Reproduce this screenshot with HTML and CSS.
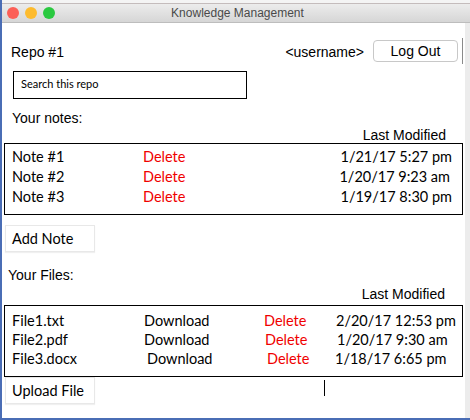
FILE: index.html
```html
<!DOCTYPE html>
<html>
<head>
<meta charset="utf-8">
<link rel="stylesheet" href="styles.css">
</head>
<body>
<div class="window">
  <div class="topline"></div>
  <div class="titlebar">
    <div class="lights">
      <span class="light red"></span>
      <span class="light yellow"></span>
      <span class="light green"></span>
    </div>
    <div class="title">Knowledge Management</div>
  </div>
  <div class="content">
    <div class="main">
      <div class="header">
        <span class="repo">Repo #1</span>
        <span class="spacer"></span>
        <span class="user">&lt;username&gt;</span>
        <button class="logout">Log Out</button>
        <span class="vline"></span>
      </div>
      <div class="search">Search this repo</div>
      <div class="label notes-label">Your notes:</div>
      <div class="label lastmod">Last Modified</div>
      <div class="box notes">
        <div class="row"><span>Note #1</span><span class="del">Delete</span><span class="date">1/21/17 5:27 pm</span></div>
        <div class="row"><span>Note #2</span><span class="del">Delete</span><span class="date d2">1/20/17 9:23 am</span></div>
        <div class="row"><span>Note #3</span><span class="del">Delete</span><span class="date">1/19/17 8:30 pm</span></div>
      </div>
      <div class="btn add">Add Note</div>
      <div class="label files-label">Your Files:</div>
      <div class="label lastmod lastmod2">Last Modified</div>
      <div class="box files">
        <div class="frow"><span>File1.txt</span><span>Download</span><span class="del">Delete</span><span>2/20/17 12:53 pm</span></div>
        <div class="frow"><span>File2.pdf</span><span>Download</span><span class="del s1">Delete</span><span class="s1">1/20/17 9:30 am</span></div>
        <div class="frow"><span>File3.docx</span><span class="s3">Download</span><span class="del s3">Delete</span><span class="sm1">1/18/17 6:65 pm</span></div>
      </div>
      <div class="bottom">
        <div class="btn upload">Upload File</div>
        <span class="caret"></span>
      </div>
    </div>
    <div class="scroll"></div>
  </div>
</div>
</body>
</html>
```

FILE: styles.css
```css
html, body {
  margin: 0;
  padding: 0;
  background: #ffffff;
}
body {
  width: 470px;
  height: 420px;
  overflow: hidden;
}
.window {
  width: 470px;
  height: 420px;
  box-sizing: border-box;
  border-left: 2px solid #4a6db5;
  border-bottom: 2px solid #4a6db5;
  display: flex;
  flex-direction: column;
  font-family: "Liberation Sans", Arial, sans-serif;
  color: #000;
}
.topline {
  height: 3px;
  border-bottom: 1px solid #c4bcbc;
  background: #f4f4f4;
}
.titlebar {
  height: 18px;
  background: linear-gradient(#ececec, #d6d6d6);
  border-bottom: 1px solid #bdbdbd;
  display: flex;
  align-items: center;
}
.lights {
  display: flex;
  gap: 6px;
  padding-left: 5px;
}
.light {
  width: 12px;
  height: 12px;
  border-radius: 50%;
  display: block;
}
.red { background: #fc5f57; }
.yellow { background: #fdbb2e; }
.green { background: #2ac940; }
.title {
  flex: 1;
  text-align: center;
  font-size: 12px;
  color: #4a4a4a;
  margin-left: -48px;
  padding-right: 2px;
}
.content {
  flex: 1;
  display: flex;
}
.main {
  flex: 1;
  display: flex;
  flex-direction: column;
}
.scroll {
  width: 5px;
  background: #ececec;
}
.header {
  margin-top: 17px;
  height: 22px;
  display: flex;
  align-items: center;
  padding-left: 9px;
  padding-right: 2px;
  font-size: 14px;
}
.repo, .user { padding-top: 2px; }
.spacer { flex: 1; }
.user { margin-right: 9px; }
.logout {
  width: 85px;
  height: 22px;
  box-sizing: border-box;
  border: 1px solid #c8c8c8;
  border-radius: 4px;
  background: #fff;
  font-family: "Liberation Sans", Arial, sans-serif;
  font-size: 14px;
  color: #000;
  padding: 0;
}
.vline {
  width: 1px;
  height: 26px;
  background: #8a8a8a;
  margin-left: 4px;
}
.search {
  margin-top: 9px;
  margin-left: 11px;
  width: 234px;
  height: 28px;
  box-sizing: border-box;
  border: 1px solid #000;
  padding-left: 7px;
  padding-top: 5px;
  font-family: Lato, "Open Sans", sans-serif;
  font-size: 11px;
  line-height: 14px;
}
.label {
  font-size: 14px;
  line-height: 16px;
  padding-top: 1px;
}
.notes-label {
  margin-top: 10px;
  padding-left: 10px;
}
.lastmod {
  text-align: right;
  padding-right: 19px;
}
.box {
  margin: 0 2px;
  border: 1px solid #000;
  box-sizing: border-box;
  height: 72px;
  font-family: Lato, "Open Sans", sans-serif;
  font-size: 14.5px;
}
.notes {
  padding: 3px 10px 0 7px;
}
.row {
  display: grid;
  grid-template-columns: 131px 1fr auto;
  line-height: 20px;
}
.d2 { padding-right: 2px; }
.del { color: #f00000; }
.btn {
  margin-left: 3px;
  width: 90px;
  height: 27px;
  box-sizing: border-box;
  border: 1px solid #e8e8e8;
  box-shadow: 0 1px 1px rgba(0,0,0,0.06);
  padding-left: 6px;
  padding-top: 1px;
  font-family: Lato, "Open Sans", sans-serif;
  font-size: 14.5px;
  line-height: 24px;
}
.add { margin-top: 10px; }
.files-label {
  margin-top: 14px;
  padding-left: 6px;
}
.lastmod2 {
  margin-top: 2px;
  padding-right: 20px;
}
.files {
  margin-top: 3px;
  padding: 5px 0 0 7px;
}
.frow {
  display: grid;
  grid-template-columns: 132px 120px 72px 1fr;
  line-height: 19px;
}
.s1 { padding-left: 1px; }
.s3 { padding-left: 3px; }
.sm1 { margin-left: -1px; }
.bottom {
  display: flex;
  align-items: flex-start;
}
.caret {
  width: 1px;
  height: 16px;
  background: #000;
  margin-left: 229px;
  margin-top: 3px;
}
```
